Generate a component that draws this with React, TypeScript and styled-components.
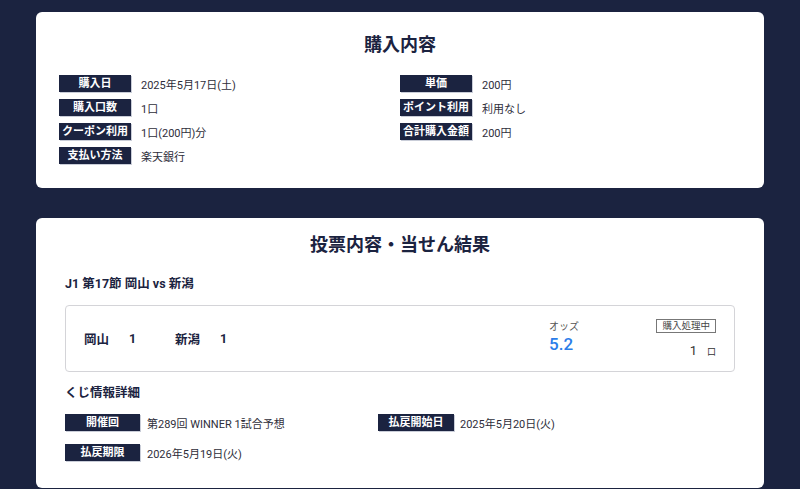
import React, { FC } from 'react'
import styled, { createGlobalStyle } from 'styled-components'

const GlobalStyle = createGlobalStyle`
  html, body {
    margin: 0;
    padding: 0;
    background: #1b2340;
  }
  body {
    font-family: Roboto, "Noto Sans CJK JP", sans-serif;
    color: #333;
  }
`

const Page = styled.main`
  padding: 12px 36px 0;
  display: flex;
  flex-direction: column;
  gap: 30px;
`

const Card = styled.section<{ $pad: number }>`
  background: #fff;
  border-radius: 6px;
  padding: 18px ${p => p.$pad}px 24px;
`

const Title = styled.h2`
  margin: 0;
  text-align: center;
  font-size: 18px;
  line-height: 30px;
  font-weight: 700;
  color: #1b2340;
`

const InfoGrid = styled.div<{ $left: string }>`
  display: grid;
  grid-template-columns: ${p => p.$left} 1fr;
  grid-auto-flow: column;
`

const Col = styled.div<{ $gap: number }>`
  display: flex;
  flex-direction: column;
  gap: ${p => p.$gap}px;
`

const Row = styled.div<{ $gap: number }>`
  display: flex;
  align-items: center;
  gap: ${p => p.$gap}px;
`

const Label = styled.span<{ $w: number }>`
  flex: none;
  width: ${p => p.$w}px;
  height: 17px;
  line-height: 17px;
  background: #1b2340;
  color: #fff;
  font-size: 11px;
  font-weight: 700;
  text-align: center;
  box-shadow: 1px 1px 0 #c9cdd8;
  white-space: nowrap;
  overflow: hidden;
`

const Value = styled.span`
  font-size: 11px;
  color: #2e2e3a;
`

const SubHead = styled.h3`
  margin: 0;
  font-size: 12.5px;
  font-weight: 700;
  color: #1b2340;
`

const VoteBox = styled.div`
  border: 1px solid #d4d4d8;
  border-radius: 4px;
  height: 65px;
  display: grid;
  grid-template-columns: 1fr 87px 80px;
  align-items: center;
  padding: 0 18px;
`

const Teams = styled.div`
  display: flex;
  align-items: center;
  font-size: 12.5px;
  font-weight: 700;
  color: #1b2340;
`

const Team = styled.span`
  width: 45px;
`

const Score = styled.span`
  width: 46px;
`

const Odds = styled.div`
  display: flex;
  flex-direction: column;
  margin-top: -2px;
`

const OddsLabel = styled.span`
  font-size: 10px;
  color: #555;
  line-height: 13px;
`

const OddsValue = styled.span`
  font-size: 17px;
  font-weight: 500;
  color: #2b7de9;
  line-height: 22px;
`

const Status = styled.div`
  display: flex;
  flex-direction: column;
  align-items: flex-end;
  gap: 10px;
`

const Badge = styled.span`
  border: 1px solid #777;
  font-size: 9.5px;
  color: #444;
  padding: 0 5px;
  line-height: 12px;
`

const Count = styled.span`
  font-size: 13px;
  color: #333;
  display: flex;
  align-items: baseline;
  gap: 10px;
  small {
    font-size: 9px;
  }
`

interface Item {
  label: string
  value: string
}

const InfoCol: FC<{ items: Item[]; w: number; gap: number; space: number }> = ({ items, w, gap, space }) => (
  <Col $gap={gap}>
    {items.map(it => (
      <Row key={it.label} $gap={space}>
        <Label $w={w}>{it.label}</Label>
        <Value>{it.value}</Value>
      </Row>
    ))}
  </Col>
)

const Purchase = styled(Card)`
  display: flex;
  flex-direction: column;
  gap: 15px;
`

const Vote = styled(Card)`
  padding-top: 12px;
  padding-bottom: 27px;
`

const VoteTitleWrap = styled.div`
  margin-bottom: 13px;
`

const MatchWrap = styled.div`
  display: flex;
  flex-direction: column;
  gap: 13px;
  margin-bottom: 10px;
`

const Detail = styled.div`
  display: flex;
  flex-direction: column;
  gap: 13px;
`

const App: FC = () => (
  <>
    <GlobalStyle />
    <Page>
      <Purchase $pad={23}>
        <Title>購入内容</Title>
        <InfoGrid $left="341px">
          <InfoCol
            w={72}
            gap={7}
            space={10}
            items={[
              { label: '購入日', value: '2025年5月17日(土)' },
              { label: '購入口数', value: '1口' },
              { label: 'クーポン利用', value: '1口(200円)分' },
              { label: '支払い方法', value: '楽天銀行' },
            ]}
          />
          <InfoCol
            w={72}
            gap={7}
            space={10}
            items={[
              { label: '単価', value: '200円' },
              { label: 'ポイント利用', value: '利用なし' },
              { label: '合計購入金額', value: '200円' },
            ]}
          />
        </InfoGrid>
      </Purchase>

      <Vote $pad={29}>
        <VoteTitleWrap>
          <Title>投票内容・当せん結果</Title>
        </VoteTitleWrap>
        <MatchWrap>
          <SubHead>J1 第17節 岡山 vs 新潟</SubHead>
          <VoteBox>
            <Teams>
              <Team>岡山</Team>
              <Score>1</Score>
              <Team>新潟</Team>
              <Score>1</Score>
            </Teams>
            <Odds>
              <OddsLabel>オッズ</OddsLabel>
              <OddsValue>5.2</OddsValue>
            </Odds>
            <Status>
              <Badge>購入処理中</Badge>
              <Count>
                1<small>口</small>
              </Count>
            </Status>
          </VoteBox>
        </MatchWrap>
        <Detail>
          <SubHead>くじ情報詳細</SubHead>
          <InfoGrid $left="313px">
            <InfoCol
              w={75}
              gap={13}
              space={7}
              items={[
                { label: '開催回', value: '第289回 WINNER 1試合予想' },
                { label: '払戻期限', value: '2026年5月19日(火)' },
              ]}
            />
            <InfoCol w={76} gap={13} space={6} items={[{ label: '払戻開始日', value: '2025年5月20日(火)' }]} />
          </InfoGrid>
        </Detail>
      </Vote>
    </Page>
  </>
)

export default App
